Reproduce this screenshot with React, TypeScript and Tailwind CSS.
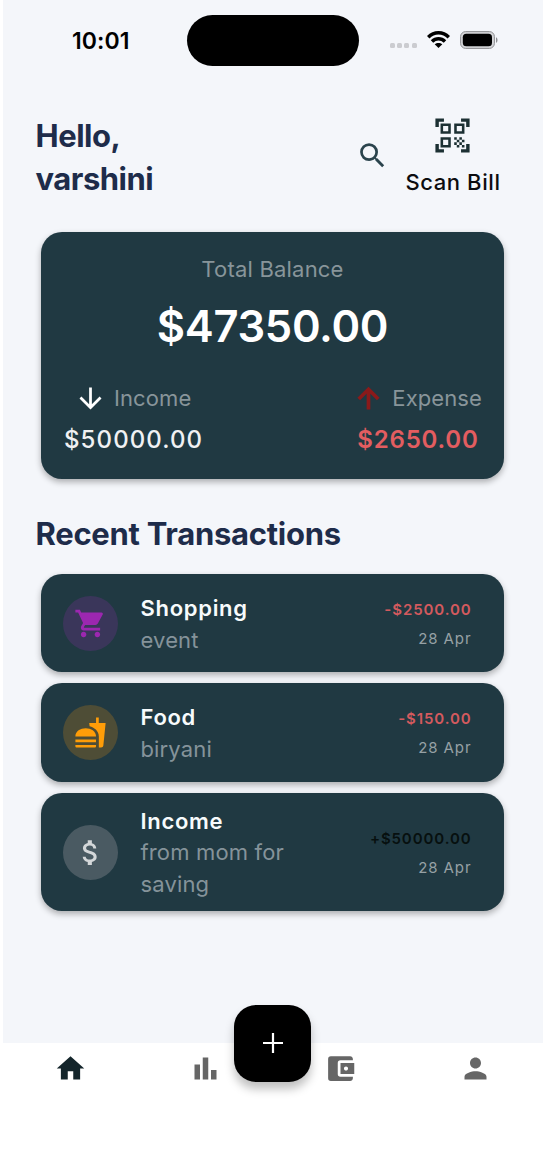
import type { ReactNode } from "react";
import {
  MdSearch,
  MdQrCodeScanner,
  MdArrowDownward,
  MdShoppingCart,
  MdFastfood,
  MdAttachMoney,
  MdHome,
  MdAccountBalanceWallet,
  MdPerson,
} from "react-icons/md";

const cardShadow = "shadow-[0_3px_6px_rgba(0,0,0,0.3)]";

function StatusBar() {
  return (
    <div className="flex h-[82px] items-start pl-[69px] pt-[15px]">
      <div className="w-[114.5px] pt-[12px] text-[23px] font-semibold leading-[29px] tracking-[0.1px] text-black">10:01</div>
      <div className="h-[51px] w-[172px] rounded-full bg-black" />
      <div className="ml-[31px] mt-[28px] flex gap-[2.4px]">
        {[0, 1, 2, 3].map((i) => (
          <span key={i} className="size-[5px] rounded-[1.5px] bg-[#cbccd0]" />
        ))}
      </div>
      <svg className="ml-[10px] mt-[16px]" width="23" height="17" viewBox="0 0 23 17" fill="none" stroke="#000" strokeWidth="3.5">
        <path d="M1.2 6.2C7 .3 16 .3 21.8 6.2" />
        <path d="M5 10.4c3.8-3.7 9.2-3.7 13 0" />
        <path d="M11.5 17 7.7 13.3c2.2-1.9 5.4-1.9 7.6 0z" fill="#000" stroke="none" />
      </svg>
      <svg className="ml-[10px] mt-[16px]" width="38" height="18" viewBox="0 0 38 18">
        <rect x=".6" y=".6" width="33.8" height="16.8" rx="5" fill="#d5d6d9" stroke="#8e8f92" strokeWidth="1" />
        <rect x="2.8" y="2.8" width="29.2" height="12.4" rx="3.5" fill="#000" />
        <path d="M36 6.2c2 .8 2 4.8 0 5.6z" fill="#8e8f92" />
      </svg>
    </div>
  );
}

function Header() {
  return (
    <div className="flex h-[150px] items-start pl-[32.5px] pt-[32px]">
      <h1 className="w-[320.5px] text-[31px] font-bold leading-[43px] tracking-[-0.5px] text-[#1e2c4a]">
        Hello,
        <br />
        varshini
      </h1>
      <MdSearch className="mt-[25px] size-[33px] text-[#2a434c]" />
      <div className="ml-[14px] flex w-[98px] flex-col items-center pt-px">
        <MdQrCodeScanner className="size-[41px] text-[#1c3033]" />
        <span className="mt-[11px] whitespace-nowrap pl-[2px] text-[22px] font-medium leading-[30px] tracking-[0.6px] text-[#0c0c0f]">Scan Bill</span>
      </div>
    </div>
  );
}

function BalanceCard() {
  return (
    <section className={`ml-[38px] mr-[39px] h-[246.5px] rounded-[21px] bg-[#203942] pt-[22px] ${cardShadow}`}>
      <div className="text-center text-[22px] leading-[30px] tracking-[0.2px] text-[#88959a]">Total Balance</div>
      <div className="mt-[12px] text-center text-[43.5px] font-semibold leading-[60px] tracking-[-0.3px] text-white">$47350.00</div>
      <div className="mt-[26px] flex justify-between pl-[23px] pr-[22px]">
        <div>
          <div className="flex items-center pl-[10px]">
            <MdArrowDownward className="size-[33px] text-white" />
            <span className="ml-[7px] text-[22px] leading-[33px] tracking-[0.1px] text-[#88959a]">Income</span>
          </div>
          <div className="mt-[8px] text-[24px] font-medium leading-[33px] tracking-[1.1px] text-[#f0f1f3]">$50000.00</div>
        </div>
        <div>
          <div className="flex items-center">
            <svg viewBox="0 0 24 24" className="-ml-[5px] size-[33px] text-[#8b1a1a]" fill="none" stroke="currentColor" strokeWidth="2.7">
              <path d="M12 20V5.500M4.900 12.400 12 5.300l7.100 7.100" />
            </svg>
            <span className="ml-[7px] text-[22px] leading-[33px] tracking-[0.1px] text-[#88959a]">Expense</span>
          </div>
          <div className="mt-[8px] text-[24px] font-semibold leading-[33px] tracking-[0.8px] text-[#e35d60]">$2650.00</div>
        </div>
      </div>
    </section>
  );
}

type TransactionProps = {
  icon: ReactNode;
  tint: string;
  title: string;
  note: string;
  amount: string;
  amountColor: string;
  size: string;
};

function Transaction({ icon, tint, title, note, amount, amountColor, size }: TransactionProps) {
  return (
    <li className={`flex items-center rounded-[21px] bg-[#203942] pl-[22px] pr-[32.5px] ${size} ${cardShadow}`}>
      <span className={`mt-px flex size-[55px] items-center justify-center rounded-full ${tint}`}>{icon}</span>
      <div className="ml-[22.5px] w-[160px] pt-[3.5px]">
        <div className="text-[22px] font-semibold leading-[31.6px] tracking-[0.7px] text-[#f7fbfc]">{title}</div>
        <div className="text-[22px] leading-[31.6px] tracking-[0.15px] text-[#85939a]">{note}</div>
      </div>
      <div className="ml-auto pt-[2px] text-right text-[15px] leading-[21px] tracking-[0.9px]">
        <div className={`font-semibold ${amountColor}`}>{amount}</div>
        <div className="mt-[8px] text-[#96a1a5]">28 Apr</div>
      </div>
    </li>
  );
}

function BottomNav() {
  return (
    <nav className="relative h-[107px] bg-white text-[#666666]">
      <div className="flex pt-[9.5px]">
        <div className="flex flex-1 justify-center">
          <MdHome className="size-[33px] text-[#14252b]" />
        </div>
        <div className="flex flex-1 justify-center">
          <svg viewBox="0 0 24 24" className="size-[33px]" fill="currentColor">
            <path d="M4 9h4v11H4zM16 13h4v7h-4zM10 4h4v16h-4z" />
          </svg>
        </div>
        <div className="flex flex-1 justify-center">
          <MdAccountBalanceWallet className="size-[33px]" />
        </div>
        <div className="flex flex-1 justify-center">
          <MdPerson className="size-[33px]" />
        </div>
      </div>
      <button className="absolute -top-[38px] left-[231px] flex size-[77px] items-center justify-center rounded-[22px] bg-black text-white shadow-[0_7px_10px_rgba(0,0,0,0.25)]">
        <svg viewBox="0 0 20 20" className="size-[20px]" stroke="currentColor" strokeWidth="2.2">
          <path d="M10 0v20M0 10h20" />
        </svg>
      </button>
    </nav>
  );
}

export default function App() {
  return (
    <div className="h-[1149px] w-[559px] overflow-hidden bg-white pl-[3px] font-['Inter',sans-serif] antialiased">
      <div className="w-[540px]">
        <main className="h-[1042.5px] bg-[#f4f6fa]">
          <StatusBar />
          <Header />
          <BalanceCard />
          <h2 className="ml-[32.5px] mt-[33.5px] h-[61.5px] text-[31px] font-bold leading-[43px] tracking-[-0.28px] text-[#1e2c4a]">
            Recent Transactions
          </h2>
          <ul className="ml-[38px] mr-[39px] flex flex-col gap-[11px]">
            <Transaction
              icon={<MdShoppingCart className="size-[33px] text-[#9c27b0]" />}
              tint="bg-[#3a365a]"
              title="Shopping"
              note="event"
              amount="-$2500.00"
              amountColor="text-[#d35a5e]"
              size="h-[98.5px]"
            />
            <Transaction
              icon={<MdFastfood className="size-[33px] text-[#ff9d08]" />}
              tint="bg-[#4e4d36]"
              title="Food"
              note="biryani"
              amount="-$150.00"
              amountColor="text-[#d35a5e]"
              size="h-[98.5px]"
            />
            <Transaction
              icon={<MdAttachMoney className="size-[33px] text-[#d4d7d9]" />}
              tint="bg-[#4a5a62]"
              title="Income"
              note="from mom for saving"
              amount="+$50000.00"
              amountColor="text-[#07100f]"
              size="h-[118px]"
            />
          </ul>
        </main>
        <BottomNav />
      </div>
    </div>
  );
}
